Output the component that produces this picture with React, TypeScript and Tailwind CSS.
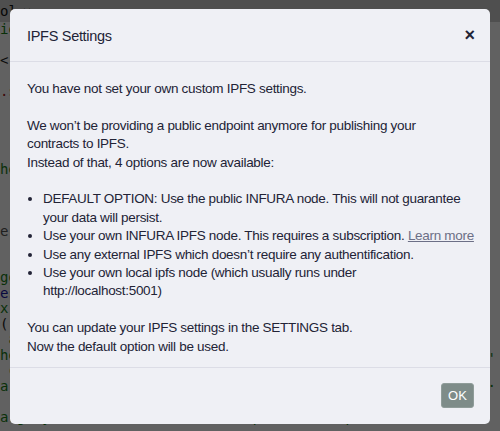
import React from "react";

const codeLines: { t: string; c: string }[] = [
  { t: "ie", c: "text-[#1a7f1a]" },
  { t: "", c: "" },
  { t: "<", c: "text-[#222]" },
  { t: "", c: "" },
  { t: ".s", c: "text-[#a31515]" },
  { t: "", c: "" },
  { t: "", c: "" },
  { t: "", c: "" },
  { t: "", c: "" },
  { t: "he", c: "text-[#1a7f1a]" },
  { t: "", c: "" },
  { t: "", c: "" },
  { t: "", c: "" },
  { t: "er", c: "text-[#555]" },
  { t: "", c: "" },
  { t: "", c: "" },
  { t: "gg", c: "text-[#1a7f1a]" },
  { t: "es", c: "text-[#1a1aa6]" },
  { t: "x", c: "text-[#1a7f1a]" },
  { t: "(", c: "text-[#222]" },
  { t: " a", c: "text-[#1a7f1a]" },
  { t: "he", c: "text-[#1a7f1a]" },
  { t: " c", c: "text-[#1a7f1a]" },
  { t: "a", c: "text-[#1a7f1a]" },
  { t: "", c: "" },
  { t: "arg: you can use the default option and update it later", c: "text-[#1a7f1a]" },
];

export default function App() {
  return (
    <div className="relative w-[500px] h-[431px] overflow-hidden bg-white">
      {/* background editor */}
      <div className="flex flex-col" style={{ fontFamily: '"DejaVu Sans Mono", monospace' }}>
        <div className="h-[22px] bg-[#cfcfcf] flex items-center text-[14px] text-[#111]">
          <span>ol</span>
          <span className="ml-[6px] font-bold">✕</span>
        </div>
        <div className="flex flex-col text-[14px] leading-[15.5px]">
          {codeLines.map((l, i) => (
            <div key={i} className={`h-[15.5px] whitespace-pre ${l.c}`}>
              {l.t}
            </div>
          ))}
        </div>
        <div className="absolute right-[4px] top-[348px] text-[14px] text-[#1a7f1a]">l'</div>
        <div className="absolute right-[4px] top-[372px] text-[14px] text-[#1a7f1a]">.</div>
      </div>

      {/* overlay */}
      <div className="absolute inset-0 bg-black/[0.62]" />

      {/* modal */}
      <div
        className="absolute left-[10px] top-[9px] w-[480px] h-[415px] rounded-[5px] bg-[#eff0f5] flex flex-col text-[#222336]"
        style={{ fontFamily: '"Liberation Sans", Arial, sans-serif' }}
      >
        <div className="h-[53px] shrink-0 flex items-center justify-between pl-[17px] pr-[15px] pt-[3px] border-b border-[#dcdde6]">
          <h5 className="text-[14.5px] font-normal tracking-[-0.3px]">IPFS Settings</h5>
          <span className="text-[18px] font-bold leading-none text-[#222336] -mt-[3px]">×</span>
        </div>
        <div className="flex-1 px-[17px] pt-[18px] text-[13.5px] leading-[18.4px] tracking-[-0.3px]">
          <div>
            You have not set your own custom IPFS settings.
            <br />
            <br />
            We won’t be providing a public endpoint anymore for publishing your
            <br />
            contracts to IPFS.
            <br />
            Instead of that, 4 options are now available:
            <br />
            <br />
          </div>
          <ul className="list-disc pl-[16px]">
            <li>DEFAULT OPTION: Use the public INFURA node. This will not guarantee your data will persist.</li>
            <li className="whitespace-nowrap">
              Use your own INFURA IPFS node. This requires a subscription.{" "}
              <a className="underline text-[#6c6f86]">Learn more</a>
            </li>
            <li>Use any external IPFS which doesn’t require any authentification.</li>
            <li>Use your own local ipfs node (which usually runs under http://localhost:5001)</li>
          </ul>
          <div>
            <br />
            You can update your IPFS settings in the SETTINGS tab.
            <br />
            Now the default option will be used.
          </div>
        </div>
        <div className="h-[57px] shrink-0 border-t border-[#dcdde6] flex items-start justify-end px-[16px] pt-[15px]">
          <button className="h-[25px] w-[33px] rounded-[3px] bg-[#7e8c89] border border-[#8f9c99] text-white text-[13px] font-medium">
            OK
          </button>
        </div>
      </div>
    </div>
  );
}
